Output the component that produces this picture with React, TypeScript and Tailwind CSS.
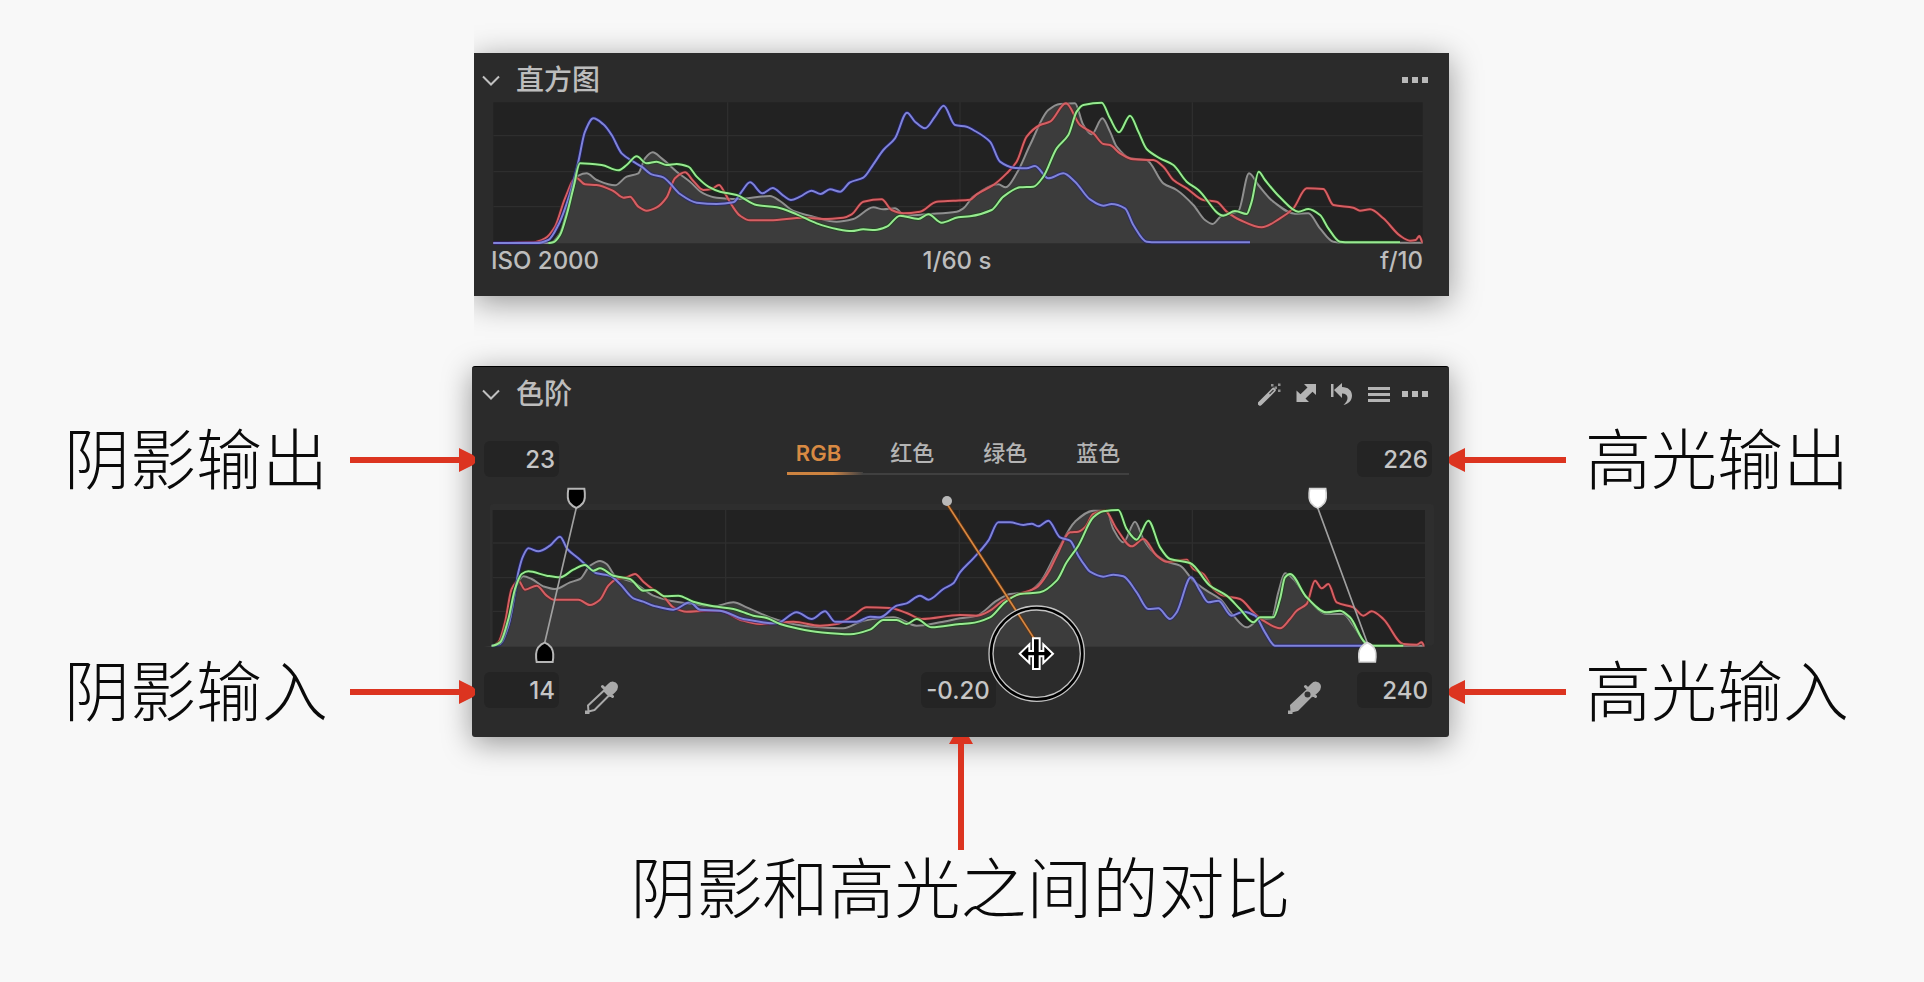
import type { ReactNode } from 'react';

type Point = [number, number];

const LUMA_BEFORE =
  '70,594 240,594 270,565 295,480 325,392 350,385 380,405 435,421 470,395 505,385 525,340 548,322 575,340 620,380 660,410 700,445 740,458 800,462 900,453 930,468 970,498 1030,515 1100,530 1150,522 1210,487 1240,493 1275,490 1305,512 1380,507 1460,500 1480,490 1510,455 1585,418 1607,427 1640,385 1680,300 1735,195 1770,177 1815,175 1840,240 1865,268 1897,220 1920,260 1940,305 1980,340 2030,345 2080,415 2120,435 2170,480 2205,525 2228,537 2255,512 2305,498 2337,385 2365,420 2410,470 2475,506 2515,505 2550,550 2590,590 2620,593 2858,593';
const RED_BEFORE =
  '70,594 190,592 225,580 255,545 285,460 318,398 345,418 380,420 430,438 460,458 480,455 505,485 530,497 560,487 590,457 615,400 645,382 670,408 700,435 725,432 747,420 765,445 785,480 810,512 840,526 900,526 1000,518 1060,522 1120,518 1145,508 1180,470 1235,463 1265,495 1300,505 1350,500 1400,470 1450,467 1500,464 1520,448 1570,420 1610,385 1640,350 1670,275 1710,240 1740,230 1788,175 1830,240 1870,265 1900,297 1920,300 1950,325 1990,343 2050,345 2080,365 2110,405 2150,430 2200,465 2240,470 2270,500 2310,525 2375,547 2430,520 2470,490 2510,430 2560,432 2590,480 2650,488 2670,497 2700,493 2740,520 2790,572 2820,587 2837,585 2848,573 2858,592';
const GREEN_BEFORE =
  '235,594 250,592 270,570 290,510 310,430 330,355 395,360 445,376 470,360 500,334 530,355 560,350 590,360 620,357 655,365 680,395 715,425 750,440 800,450 860,480 920,487 980,508 1040,535 1100,552 1145,558 1180,553 1215,555 1250,545 1290,512 1345,522 1375,508 1415,533 1465,517 1500,514 1565,495 1600,455 1650,427 1690,425 1720,395 1760,310 1795,270 1820,200 1840,180 1895,173 1920,220 1947,262 1980,212 2005,260 2030,312 2070,340 2110,360 2150,410 2185,435 2260,512 2295,498 2330,507 2345,470 2366,380 2385,405 2430,457 2485,500 2515,492 2550,510 2575,550 2610,590 2640,592 2790,592';
const BLUE_BEFORE =
  '70,594 200,594 235,585 265,540 300,445 325,350 345,260 370,220 400,238 425,270 455,325 490,350 515,365 545,388 580,397 600,415 630,447 680,473 740,477 790,472 815,440 840,412 877,445 908,429 940,452 963,465 990,455 1025,437 1052,447 1080,433 1110,440 1140,412 1180,398 1210,358 1240,315 1275,280 1311,203 1335,230 1365,250 1395,215 1421,182 1455,240 1490,245 1510,255 1560,290 1590,350 1630,368 1670,370 1695,363 1735,400 1780,385 1815,410 1860,463 1900,482 1925,477 1965,490 1990,540 2030,590 2060,592 2340,592';

const LUMA_AFTER =
  '95,860 125,850 150,780 170,680 190,652 215,660 250,682 285,690 330,670 360,660 390,620 420,606 440,615 465,650 520,670 580,710 630,725 700,735 760,742 820,730 860,745 930,775 1000,795 1080,805 1150,808 1210,785 1300,775 1370,800 1440,790 1500,778 1550,770 1610,725 1650,705 1700,700 1740,670 1790,580 1845,488 1900,455 1940,455 1960,510 1990,550 2025,488 2050,540 2080,580 2120,608 2160,620 2200,665 2240,695 2280,720 2320,770 2360,805 2400,780 2435,778 2455,700 2475,643 2500,660 2540,715 2600,765 2650,765 2680,800 2720,855 2745,860 2893,860';
const RED_AFTER =
  '95,860 115,850 135,790 155,690 175,665 195,692 230,680 260,710 280,722 355,722 390,738 420,722 445,680 470,660 500,655 525,645 550,668 580,692 610,712 640,745 680,758 740,755 780,755 840,782 900,795 1000,788 1080,800 1130,795 1180,770 1220,745 1290,747 1340,762 1385,780 1500,768 1550,770 1590,755 1630,725 1680,705 1730,685 1765,640 1790,590 1830,520 1855,518 1875,505 1900,465 1935,455 1970,510 2015,562 2050,540 2090,590 2120,608 2180,602 2200,630 2230,645 2260,690 2290,710 2340,720 2380,760 2410,785 2460,808 2490,780 2510,755 2540,735 2565,665 2585,688 2605,675 2630,730 2680,745 2710,770 2735,757 2770,780 2830,855 2870,857 2885,850 2893,860';
const GREEN_AFTER =
  '95,860 120,850 145,780 165,690 185,645 205,637 260,650 300,655 340,632 375,618 400,635 420,628 460,650 510,660 550,695 580,693 615,712 655,710 700,728 760,742 820,750 880,770 920,777 960,795 1010,808 1080,820 1170,826 1230,812 1270,783 1310,783 1340,795 1370,780 1415,805 1500,795 1530,793 1590,775 1635,730 1680,705 1740,700 1790,665 1820,610 1855,560 1900,475 1930,457 1975,453 2000,510 2030,542 2065,485 2100,565 2130,600 2190,612 2250,680 2300,710 2340,750 2380,790 2400,775 2440,775 2460,720 2475,655 2490,645 2540,715 2600,760 2640,755 2670,775 2715,850 2740,860 2830,860';
const BLUE_AFTER =
  '95,860 120,855 145,800 165,700 175,640 190,590 205,568 235,577 270,560 300,533 322,570 355,598 380,620 410,643 450,650 480,675 520,718 550,728 580,740 640,752 690,730 720,752 780,755 850,780 950,793 1010,760 1055,780 1095,757 1125,788 1190,788 1230,773 1260,775 1310,740 1340,733 1380,710 1405,722 1450,690 1480,673 1500,640 1540,598 1585,545 1615,490 1650,490 1690,498 1715,494 1735,502 1765,485 1800,535 1830,545 1855,590 1875,620 1890,638 1930,653 1960,647 1990,652 2030,700 2065,750 2095,748 2130,780 2150,760 2193,655 2220,695 2245,730 2275,725 2315,770 2350,758 2385,770 2415,820 2445,860 2475,860 2720,860';

function curve(data: string): string {
  const pts = data.split(' ').map((pair) => pair.split(',').map(Number) as Point);
  let d = `M${pts[0][0]} ${pts[0][1]}`;
  for (let i = 0; i < pts.length - 1; i++) {
    const before = pts[Math.max(0, i - 1)];
    const from = pts[i];
    const to = pts[i + 1];
    const after = pts[Math.min(pts.length - 1, i + 2)];
    const third = (to[0] - from[0]) / 3;
    const slope = (a: Point, b: Point, c: Point) => {
      if (a[0] === b[0] || b[0] === c[0]) return 0;
      const left = (b[1] - a[1]) / (b[0] - a[0]);
      const right = (c[1] - b[1]) / (c[0] - b[0]);
      return left * right <= 0 ? 0 : (2 * left * right) / (left + right);
    };
    const m0 = slope(before, from, to);
    const m1 = slope(from, to, after);
    d += `C${from[0] + third} ${from[1] + m0 * third} ${to[0] - third} ${to[1] - m1 * third} ${to[0]} ${to[1]}`;
  }
  return d;
}

type Channels = { luma: string; red: string; green: string; blue: string; base: number };

function Curves({ luma, red, green, blue, base }: Channels) {
  return (
    <g fill="none" strokeWidth="6" strokeLinejoin="round">
      <path d={`${curve(luma)}V${base}H70Z`} fill="#3c3c3c" stroke="none" />
      <path d={curve(luma)} stroke="#8f8f8f" />
      <path d={curve(red)} stroke="#7a1418" strokeWidth="11" opacity="0.4" />
      <path d={curve(red)} stroke="#d65f63" />
      <path d={curve(blue)} stroke="#1d1d8c" strokeWidth="12" opacity="0.5" />
      <path d={curve(blue)} stroke="#7f83da" />
      <path d={curve(green)} stroke="#0d4d0d" strokeWidth="12" opacity="0.5" />
      <path d={curve(green)} stroke="#97ea90" />
    </g>
  );
}

function Chevron() {
  return (
    <svg viewBox="0 0 18 11" className="h-[11px] w-[18px]" fill="none" stroke="#c0c0c0" strokeWidth="2">
      <path d="M1 1.5 9 9.5 17 1.5" />
    </svg>
  );
}

function Dots() {
  return (
    <svg viewBox="0 0 26 24" className="h-6 w-[26px]" fill="#b9b9b9">
      <path d="M0 9h6v6H0zM10 9h6v6h-6zM20 9h6v6h-6z" />
    </svg>
  );
}

function Wand() {
  return (
    <svg viewBox="0 0 26 24" className="h-6 w-[26px]">
      <path d="M2 21.5 15.500 8" stroke="#b4b4b4" strokeWidth="4.500" strokeLinecap="round" />
      <path d="M11.500 12 15.500 8" stroke="#3a3a3a" strokeWidth="1.200" />
      <path d="M13 2h2.500v2.500H13zM16.500 4.500H19V7h-2.500zM20 1.500h2.500V4H20zM20 7.500h2.500V10H20z" fill="#8f8f8f" />
    </svg>
  );
}

function Expand() {
  return (
    <svg viewBox="0 0 26 24" className="h-6 w-[26px]" fill="#b4b4b4">
      <path d="M10 2H22V13L18.500 9.700 11.500 16.500 15 20H2.500V8.500L6.500 12.200 13.500 5.500Z" />
    </svg>
  );
}

function Reset() {
  return (
    <svg viewBox="0 0 26 24" className="h-6 w-[26px]" fill="#b4b4b4">
      <path d="M1 2h2.500v13H1z" />
      <path d="M4 8 12 1V5C18 5 22 8.500 22 13.500 22 18.500 18.500 22 13.500 23 16 20.500 17.500 18.500 17.500 16 17.500 13 15.500 11.500 12 11.500V16Z" />
    </svg>
  );
}

function Menu() {
  return (
    <svg viewBox="0 0 26 24" className="h-6 w-[26px]" fill="#b4b4b4">
      <path d="M2 5h22v3H2zM2 11h22v3H2zM2 17h22v3H2z" />
    </svg>
  );
}

function Dropper({ filled }: { filled?: boolean }) {
  return (
    <svg viewBox="0 0 34 34" className="h-[34px] w-[34px]">
      <path d="M18.500 5.500 28.500 15.500M21 8 25 4C28 1 31 2 32 4 33 6 32.500 8 30 10.500L26 14Z" fill="#a9a9a9" stroke="#a9a9a9" strokeWidth="3" strokeLinecap="round" />
      <path
        d="M20 9.500 25 14.500 10.500 29 4.500 30.500 4 24.500Z"
        fill={filled ? '#a9a9a9' : '#2b2b2b'}
        stroke="#a9a9a9"
        strokeWidth="2"
        strokeLinejoin="round"
      />
      <path d="M1 29.500h4.500V33H1z" fill="#a9a9a9" />
      {filled && <circle cx="20.500" cy="13.500" r="3" fill="#333" />}
    </svg>
  );
}

function IconButton({ label, children }: { label: string; children: ReactNode }) {
  return (
    <button type="button" aria-label={label} className="flex h-6 w-[26px] items-center justify-center">
      {children}
    </button>
  );
}

function PanelHeader({ title, children }: { title: string; children: ReactNode }) {
  return (
    <header className="flex items-center justify-between pt-[7px] pr-[21px] pb-px">
      <button type="button" aria-expanded="true" className="flex items-center gap-4 text-[28px] leading-10 font-medium text-[#bdbdbd]">
        <Chevron />
        <span>{title}</span>
      </button>
      <div className="flex items-center gap-[10px]">{children}</div>
    </header>
  );
}

function ValueField({ label, value, center }: { label: string; value: string; center?: boolean }) {
  return (
    <input
      type="text"
      aria-label={label}
      defaultValue={value}
      className={`h-9 w-[75px] rounded-md bg-[#242424] text-2xl font-medium text-[#c6c6c6] outline-none ${center ? 'text-center' : 'pr-1 text-right'}`}
    />
  );
}

function SideArrow({ toLeft }: { toLeft?: boolean }) {
  return (
    <div className={`flex flex-1 items-center ${toLeft ? 'flex-row-reverse' : ''}`}>
      <div className="h-[6px] flex-1 bg-[#dc3420]" />
      <svg viewBox="0 0 16 24" className={`h-6 w-4 ${toLeft ? 'rotate-180' : ''}`} fill="#dc3420">
        <path d="M0 0 14 7 16 9V15L14 17 0 24Z" />
      </svg>
    </div>
  );
}

function Note({ children }: { children: ReactNode }) {
  return <span className="text-[66px] leading-none font-light whitespace-nowrap text-[#0a0a0a]">{children}</span>;
}

const TABS = ['RGB', '红色', '绿色', '蓝色'];

export default function App() {
  return (
    <main className="grid min-h-screen grid-cols-[472fr_977fr_475fr] content-start bg-[#f8f8f8] pt-[53px] font-['Inter','Noto_Sans_CJK_SC',sans-serif]">
      <section className="col-start-2 ml-[2px] bg-[#2b2b2b] pb-5 shadow-[0_6px_30px_rgba(0,0,0,0.4)] [clip-path:inset(-60px_-60px_-60px_0)]">
        <div className="pl-2">
          <PanelHeader title="直方图">
            <IconButton label="更多">
              <Dots />
            </IconButton>
          </PanelHeader>
        </div>
        <svg viewBox="12 168 2925 435" className="block w-full" role="img" aria-label="直方图">
          <rect x="70" y="172" width="2788" height="422" fill="#222" />
          <path d="M70 272H2858M70 380H2858M70 485H2858M773 172V594M1470 172V594M2167 172V594" stroke="#2e2e2e" strokeWidth="4" />
          <Curves luma={LUMA_BEFORE} red={RED_BEFORE} green={GREEN_BEFORE} blue={BLUE_BEFORE} base={595} />
        </svg>
        <div className="grid grid-cols-3 pr-[26px] pl-[17px] text-2xl leading-[30px] font-medium text-[#bdbdbd]">
          <span>ISO 2000</span>
          <span className="text-center">1/60 s</span>
          <span className="text-right">f/10</span>
        </div>
      </section>

      <div className="col-start-1 row-start-2 mt-[70px] flex flex-col gap-[166px] pt-[61px] pl-16">
        <div className="relative z-10 -mr-[3px] flex items-center gap-[22px]">
          <Note>阴影输出</Note>
          <SideArrow />
        </div>
        <div className="relative z-10 -mr-[3px] flex items-center gap-[22px]">
          <Note>阴影输入</Note>
          <SideArrow />
        </div>
      </div>

      <section className="col-start-2 row-start-2 mt-[70px] rounded-[3px] border-t border-black bg-[#2b2b2b] pb-[29px] shadow-[0_6px_30px_rgba(0,0,0,0.4)]">
        <div className="pl-[10px]">
          <PanelHeader title="色阶">
            <IconButton label="自动调整">
              <Wand />
            </IconButton>
            <IconButton label="复制">
              <Expand />
            </IconButton>
            <IconButton label="重置">
              <Reset />
            </IconButton>
            <IconButton label="预设">
              <Menu />
            </IconButton>
            <IconButton label="更多">
              <Dots />
            </IconButton>
          </PanelHeader>
        </div>
        <div className="mt-[26px] flex items-start justify-between pr-[17px] pl-3">
          <ValueField label="阴影输出" value="23" />
          <div className="relative flex h-9 gap-[49px] px-[9px] text-[22px] leading-6 font-medium text-[#b4b4b4]" role="tablist">
            {TABS.map((tab, i) => (
              <button
                key={tab}
                type="button"
                role="tab"
                aria-selected={i === 0}
                className={`h-6 ${i === 0 ? 'font-semibold text-[#d88a43]' : ''}`}
              >
                {tab}
              </button>
            ))}
            <div className="absolute inset-x-0 bottom-[2px] h-[2px] bg-[#404040]" />
            <div className="absolute bottom-[2px] left-0 h-[3px] w-[76px] bg-linear-to-r from-[#cd8340] from-60% to-[#404040]" />
          </div>
          <ValueField label="高光输出" value="226" />
        </div>
        <svg viewBox="36 360 2931 561" className="relative mt-[2px] block w-full overflow-visible" role="img" aria-label="色阶">
          <rect x="90" y="435" width="2832" height="425" rx="10" fill="#2e2e2e" />
          <rect x="98" y="453" width="2797" height="409" fill="#222" />
          <path d="M98 552H2895M98 656H2895M98 757H2895M797 453V862M1498 453V862M2197 453V862" stroke="#2e2e2e" strokeWidth="4" />
          <Curves luma={LUMA_AFTER} red={RED_AFTER} green={GREEN_AFTER} blue={BLUE_AFTER} base={863} />
          <path d="M349 446 254 852M2573 446 2722 852" stroke="#a0a0a0" strokeWidth="5" />
          <path d="M1462 436 1722 838" stroke="#6b3308" strokeWidth="11" opacity="0.6" />
          <path d="M1462 436 1722 838" stroke="#d98842" strokeWidth="5" />
          <circle cx="1461" cy="426" r="15" fill="#b9b9b9" />
          <path d="M325 389H373Q378 420 369 432 359 444 349 447 339 444 329 432 320 420 325 389Z" fill="#000" stroke="#b5b5b5" strokeWidth="6" />
          <path d="M230 909H278Q283 880 274 866 264 854 254 851 244 854 234 866 225 880 230 909Z" fill="#000" stroke="#b5b5b5" strokeWidth="6" />
          <path d="M2549 389H2597Q2602 420 2593 432 2583 444 2573 447 2563 444 2553 432 2544 420 2549 389Z" fill="#fff" stroke="#d5d5d5" strokeWidth="5" />
          <path d="M2698 909H2746Q2751 880 2742 866 2732 854 2722 851 2712 854 2702 866 2693 880 2698 909Z" fill="#fff" stroke="#d5d5d5" strokeWidth="5" />
          <circle cx="1730" cy="884" r="137" fill="none" stroke="#000" strokeWidth="11" />
          <circle cx="1730" cy="884" r="143" fill="none" stroke="#c4c4c4" strokeWidth="4" />
          <circle cx="1730" cy="884" r="131" fill="none" stroke="#c4c4c4" strokeWidth="4" />
          <path
            d="M1719 838H1739V876H1750V856L1779 884 1750 912V892H1739V930H1719V892H1708V912L1679 884 1708 856V876H1719Z"
            fill="#000"
            stroke="#fff"
            strokeWidth="6"
          />
        </svg>
        <div className="mt-[6px] grid h-9 grid-cols-[1fr_auto_1fr] items-start pr-[17px] pl-3">
          <div className="flex gap-[25px]">
            <ValueField label="阴影输入" value="14" />
            <button type="button" aria-label="拾取阴影" className="mt-[9px]">
              <Dropper />
            </button>
          </div>
          <ValueField label="对比" value="-0.20" center />
          <div className="flex justify-end gap-9">
            <button type="button" aria-label="拾取高光" className="mt-[9px]">
              <Dropper filled />
            </button>
            <ValueField label="高光输入" value="240" />
          </div>
        </div>
      </section>

      <div className="col-start-3 row-start-2 mt-[70px] flex flex-col gap-[166px] pt-[61px] pr-[75px]">
        <div className="relative z-10 flex items-center gap-[19px]">
          <SideArrow toLeft />
          <Note>高光输出</Note>
        </div>
        <div className="relative z-10 flex items-center gap-[19px]">
          <SideArrow toLeft />
          <Note>高光输入</Note>
        </div>
      </div>

      <div className="col-start-2 row-start-3 flex flex-col items-center gap-[6px] pb-10">
        <svg viewBox="0 0 24 113" className="relative h-[113px] w-6" fill="#dc3420">
          <path d="M4 0H20L24 7H15V113H9V7H0Z" />
        </svg>
        <Note>阴影和高光之间的对比</Note>
      </div>
    </main>
  );
}
